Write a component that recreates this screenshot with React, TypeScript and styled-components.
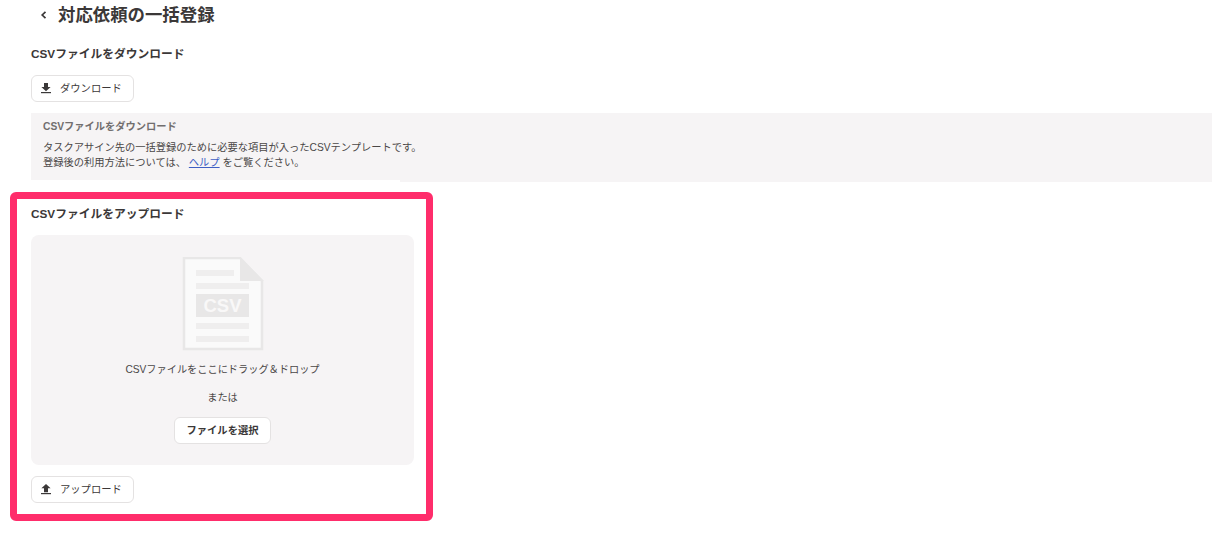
import React from "react";
import styled, { createGlobalStyle } from "styled-components";

const Global = createGlobalStyle`
  html, body { margin: 0; padding: 0; background: #fff; }
  body { font-family: "Liberation Sans", "Noto Sans CJK JP", sans-serif; color: #403d3d; }
  * { box-sizing: border-box; }
`;

const Page = styled.div`
  position: relative;
  width: 1212px;
  height: 551px;
  overflow: hidden;
  padding-left: 31px;
`;

const Header = styled.header`
  display: flex;
  align-items: center;
  height: 30px;
  padding-left: 8px;
  gap: 9px;
`;

const BackIcon = styled.svg`
  width: 10px;
  height: 10px;
  fill: none;
  stroke: #3b3838;
  stroke-width: 1.7;
`;

const PageTitle = styled.h1`
  margin: 0;
  font-size: 17.4px;
  line-height: 30px;
  font-weight: 700;
  color: #3b3838;
`;

const SectionTitle = styled.h2`
  margin: 0;
  font-size: 11.75px;
  line-height: 18px;
  font-weight: 700;
  color: #3b3838;
`;

const DownloadSection = styled.section`
  display: flex;
  flex-direction: column;
  align-items: flex-start;
  padding-top: 15px;
`;

const Button = styled.button`
  display: flex;
  align-items: center;
  justify-content: ${(p) => (p.$icon ? "flex-start" : "center")};
  gap: 8px;
  height: 27px;
  padding: 0 0 2px ${(p) => (p.$icon ? "8px" : "0")};
  width: ${(p) => p.$width}px;
  background: #fff;
  border: 1px solid #e4e2e2;
  border-radius: 6px;
  font-family: inherit;
  font-size: 10.3px;
  font-weight: ${(p) => p.$weight || 400};
  color: #3b3838;
`;

const ActionIcon = styled.svg`
  width: 12px;
  height: 12px;
  fill: #3b3838;
`;

const DownloadButton = styled(Button)`
  margin-top: 12px;
`;

const InfoPanel = styled.div`
  position: relative;
  align-self: stretch;
  margin-top: 11px;
  height: 69px;
  padding: 6px 12px 0;
  background: #f6f4f5;
  font-size: 10.25px;
  line-height: 15px;
  color: #4a4747;

  &::after {
    content: "";
    position: absolute;
    left: 0;
    bottom: 0;
    width: 369px;
    height: 2px;
    background: #fff;
  }
`;

const InfoTitle = styled.div`
  font-size: 10.25px;
  line-height: 16px;
  font-weight: 700;
  color: #716e6e;
  margin-bottom: 5px;
`;

const HelpLink = styled.a`
  color: #3f5fc4;
  text-decoration: underline;
  margin-right: 3px;
`;

const UploadSection = styled.section`
  display: flex;
  flex-direction: column;
  align-items: flex-start;
  width: 383px;
  margin-top: 23px;
`;

const DropZone = styled.div`
  display: flex;
  flex-direction: column;
  align-items: center;
  width: 100%;
  height: 230px;
  margin-top: 12px;
  padding-top: 22px;
  background: #f6f4f5;
  border-radius: 8px;
`;

const DropText = styled.p`
  margin: 0;
  font-size: 10.2px;
  line-height: 16px;
  color: #4a4747;
`;

const DropHint = styled(DropText)`
  margin-top: 11px;
`;

const OrText = styled(DropText)`
  margin-top: 12px;
`;

const SelectButton = styled(Button)`
  margin-top: 11px;
`;

const UploadButton = styled(Button)`
  margin-top: 11px;
`;

const FileArt = styled.svg`
  width: 82px;
  height: 94px;
  display: block;
`;

const FileArtLabel = styled.text`
  font-family: "Liberation Sans", sans-serif;
  font-size: 18.5px;
  font-weight: 700;
  fill: #f9f8f8;
`;

const Highlight = styled.div`
  position: absolute;
  left: 10px;
  top: 192px;
  width: 423px;
  height: 329px;
  border: 7px solid #ff2d6b;
  border-radius: 6px;
  pointer-events: none;
`;

const DownloadGlyph = () => (
  <ActionIcon viewBox="0 0 12 12">
    <path d="M4 1h4v4h2.6L6 9.2 1.4 5H4z" />
    <rect x="1" y="10" width="10" height="1.2" />
  </ActionIcon>
);

const UploadGlyph = () => (
  <ActionIcon viewBox="0 0 12 12">
    <path d="M6 1l4.6 4.2H8v4H4v-4H1.4z" />
    <rect x="1" y="10" width="10" height="1.2" />
  </ActionIcon>
);

const CsvFile = () => (
  <FileArt viewBox="0 0 82 94">
    <path d="M2 1h56l22 23v68H2z" fill="#fafafa" stroke="#e8e7e7" strokeWidth="2.5" />
    <path d="M58 0l24 24H58z" fill="#e8e7e7" />
    <rect x="14" y="13" width="38" height="6" fill="#efeeee" />
    <rect x="14" y="26" width="53" height="6" fill="#efeeee" />
    <rect x="14" y="37" width="53" height="23" fill="#e8e7e7" />
    <FileArtLabel x="40.5" y="55" textAnchor="middle">CSV</FileArtLabel>
    <rect x="14" y="66" width="53" height="6" fill="#efeeee" />
    <rect x="14" y="79" width="53" height="6" fill="#efeeee" />
  </FileArt>
);

export default function App() {
  return (
    <Page>
      <Global />
      <Header>
        <BackIcon viewBox="0 0 10 10">
          <path d="M6.5 1.8L3.2 5l3.3 3.2" />
        </BackIcon>
        <PageTitle>対応依頼の一括登録</PageTitle>
      </Header>

      <DownloadSection>
        <SectionTitle>CSVファイルをダウンロード</SectionTitle>
        <DownloadButton $width={103} $icon>
          <DownloadGlyph />
          ダウンロード
        </DownloadButton>
        <InfoPanel>
          <InfoTitle>CSVファイルをダウンロード</InfoTitle>
          <div>タスクアサイン先の一括登録のために必要な項目が入ったCSVテンプレートです。</div>
          <div>
            登録後の利用方法については、 <HelpLink href="#">ヘルプ</HelpLink>をご覧ください。
          </div>
        </InfoPanel>
      </DownloadSection>

      <UploadSection>
        <SectionTitle>CSVファイルをアップロード</SectionTitle>
        <DropZone>
          <CsvFile />
          <DropHint>CSVファイルをここにドラッグ＆ドロップ</DropHint>
          <OrText>または</OrText>
          <SelectButton $width={97} $weight={700}>ファイルを選択</SelectButton>
        </DropZone>
        <UploadButton $width={103} $icon>
          <UploadGlyph />
          アップロード
        </UploadButton>
      </UploadSection>

      <Highlight />
    </Page>
  );
}
